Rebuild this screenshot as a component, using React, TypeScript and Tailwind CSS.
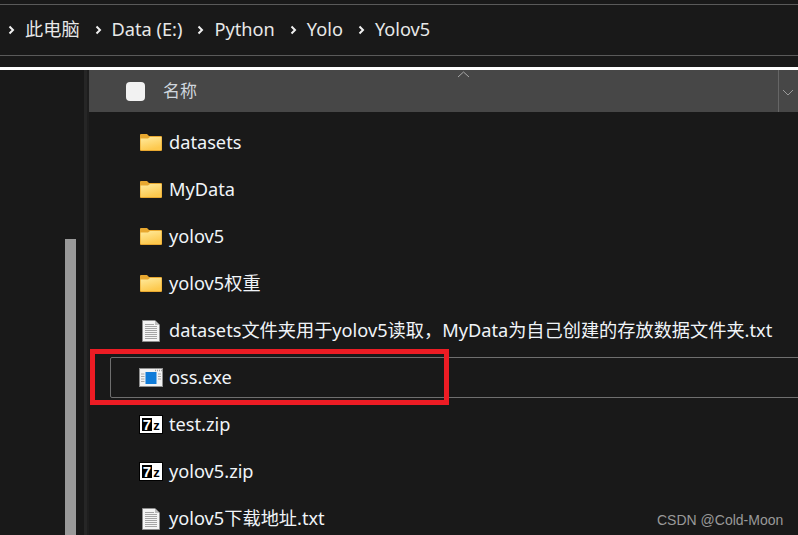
const cjkFont = "font-['Noto_Sans','Noto_Sans_CJK_SC',sans-serif]";

function FolderIcon() {
  return (
    <svg width="22" height="17" viewBox="0 0 22 17" className="shrink-0">
      <defs>
        <linearGradient id="folderFill" x1="0" y1="0" x2="0.4" y2="1">
          <stop offset="0" stopColor="#ffeb9e" />
          <stop offset="1" stopColor="#fdc94e" />
        </linearGradient>
      </defs>
      <path d="M0 1 Q0 0 1 0 H7 L9 2 H21 Q22 2 22 3 V16 Q22 17 21 17 H1 Q0 17 0 16 Z" fill="#e8a830" />
      <path d="M0.6 4.5 H8 L10 3 H21.4 V15.4 Q21.4 16 20.8 16 H1.2 Q0.6 16 0.6 15.4 Z" fill="url(#folderFill)" />
    </svg>
  );
}

function DocIcon() {
  return (
    <svg width="18" height="22" viewBox="0 0 18 22" className="shrink-0">
      <path d="M0.5 0.5 H13 L17.5 5 V21.5 H0.5 Z" fill="#f4f4f4" stroke="#8e8e8e" />
      <path d="M13 0.5 V5 H17.5 Z" fill="#bdbdbd" />
      <path d="M3 4.5 H12 M3 6.5 H15 M3 8.5 H15 M3 10.5 H15 M3 12.5 H15 M3 14.5 H15 M3 16.5 H15 M3 18.5 H15" stroke="#a4a4a4" />
    </svg>
  );
}

function ExeIcon() {
  return (
    <svg width="24" height="19" viewBox="0 0 24 19" className="shrink-0">
      <rect x="0.5" y="0.5" width="23" height="18" fill="#f2f2f2" stroke="#8f8f8f" />
      <path d="M16 2.5 H23" stroke="#a0a0a0" strokeWidth="1.5" strokeDasharray="1 1" />
      <rect x="6.5" y="4" width="11" height="12" fill="#0f7bd8" />
      <path d="M2 6 H5.5 M2 8.5 H5.5 M2 11 H5.5 M2 13.5 H5.5 M19 6 H22 M19 8.5 H22 M19 11 H22" stroke="#a8a8a8" />
    </svg>
  );
}

function ZipIcon() {
  return (
    <svg width="24" height="19" viewBox="0 0 24 19" className="shrink-0">
      <rect width="24" height="19" fill="#000" />
      <rect x="1" y="1" width="22" height="17" fill="#fff" />
      <rect x="3" y="3" width="10" height="13" fill="#000" />
      <text x="8" y="14.5" textAnchor="middle" fontSize="15" fontWeight="700" fill="#fff" fontFamily="Liberation Sans">7</text>
      <text x="17.5" y="15" textAnchor="middle" fontSize="13" fontWeight="700" fill="#000" fontFamily="Liberation Sans">z</text>
    </svg>
  );
}

const rows = [
  { name: "datasets", icon: <FolderIcon /> },
  { name: "MyData", icon: <FolderIcon /> },
  { name: "yolov5", icon: <FolderIcon /> },
  { name: "yolov5权重", icon: <FolderIcon /> },
  { name: "datasets文件夹用于yolov5读取，MyData为自己创建的存放数据文件夹.txt", icon: <DocIcon /> },
  { name: "oss.exe", icon: <ExeIcon />, selected: true },
  { name: "test.zip", icon: <ZipIcon /> },
  { name: "yolov5.zip", icon: <ZipIcon /> },
  { name: "yolov5下载地址.txt", icon: <DocIcon /> },
];

const crumbs = ["此电脑", "Data (E:)", "Python", "Yolo", "Yolov5"];

function Chevron() {
  return (
    <svg width="8" height="10" viewBox="0 0 8 10" className="shrink-0">
      <path d="M2.5 1.5 L6 5 L2.5 8.5" fill="none" stroke="#f0f0f0" strokeWidth="2" />
    </svg>
  );
}

export default function App() {
  return (
    <div className={`relative flex h-[535px] w-[798px] flex-col overflow-hidden bg-[#191919] ${cjkFont}`}>
      {/* Address bar */}
      <div className="mt-1 flex h-[52px] shrink-0 items-center border-y border-[#5a5a5a] pl-[7px] text-[18.2px] text-[#e8e8e8]">
        {crumbs.map((crumb) => (
          <div key={crumb} className="flex items-center">
            <Chevron />
            <span className="mr-[14px] ml-[10px] whitespace-nowrap">{crumb}</span>
          </div>
        ))}
      </div>
      <div className="mt-[11px] h-[3px] shrink-0 bg-white" />

      <div className="flex min-h-0 flex-1">
        {/* Nav pane */}
        <div className="flex w-[89px] shrink-0">
          <div className="flex w-[84px] justify-end pt-[169px] pr-[8px]">
            <div className="w-[11px] bg-[#999999]" />
          </div>
          <div className="w-[3px] bg-[#262626]" />
          <div className="w-[2px] bg-[#1e1e1e]" />
        </div>

        {/* File list */}
        <div className="min-w-0 flex-1">
          <div className="relative flex h-[42px] items-center bg-[#474747] pl-[37px]">
            <div className="h-[19px] w-[19px] rounded-[4px] bg-[#f2f2f2]" />
            <span className="ml-[18px] text-[17px] text-[#cfd6dd]">名称</span>
            <svg width="13" height="7" viewBox="0 0 13 7" className="absolute top-[1px] left-[368px]">
              <path d="M1 6 L6.5 1 L12 6" fill="none" stroke="#a8a8a8" />
            </svg>
            <div className="absolute top-0 right-[19px] h-full w-px bg-[#666666]" />
            <svg width="12" height="7" viewBox="0 0 12 7" className="absolute top-[19px] right-[4px]">
              <path d="M1 1 L6 6 L11 1" fill="none" stroke="#9a9a9a" />
            </svg>
          </div>

          <div className="pt-[7px] pl-[21px]">
            {rows.map((row) => (
              <div key={row.name} className="flex h-[47px] items-center">
                <div
                  className={
                    row.selected
                      ? "-mr-2 flex h-[41px] flex-1 items-center rounded-[2px] border border-[#6f6f6f]"
                      : "flex h-[41px] flex-1 items-center border border-transparent"
                  }
                >
                  <div className="flex w-[58px] shrink-0 justify-center pr-[3px] pl-[25px]">{row.icon}</div>
                  <span className="text-[18.2px] whitespace-nowrap text-[#f0f4f8]">{row.name}</span>
                </div>
              </div>
            ))}
          </div>
        </div>
      </div>

      {/* Red annotation box */}
      <div className="absolute top-[349px] left-[90px] h-[56px] w-[359px] border-[5px] border-[#ed1c24]" />

      {/* Watermark */}
      <div className="absolute top-[510px] left-[657px] font-['Liberation_Sans',sans-serif] text-[14px] whitespace-nowrap text-[#999999]">
        CSDN @Cold-Moon
      </div>
    </div>
  );
}
